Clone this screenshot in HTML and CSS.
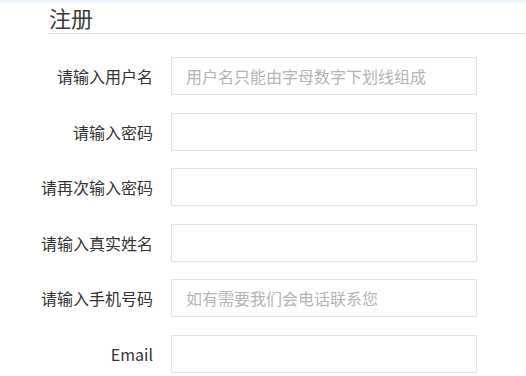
FILE: index.html
```html
<!DOCTYPE html>
<html lang="zh-CN">
<head>
    <meta charset="UTF-8">
    <meta name="viewport" content="width=device-width, initial-scale=1.0">
    <title>注册</title>
    <link rel="stylesheet" href="styles.css">
</head>
<body>
    <div class="page">
        <h2 class="title">注册</h2>

        <form class="reg-form">
            <label for="username">请输入用户名</label>
            <input type="text" id="username" placeholder="用户名只能由字母数字下划线组成">

            <label for="password">请输入密码</label>
            <input type="password" id="password">

            <label for="password2">请再次输入密码</label>
            <input type="password" id="password2">

            <label for="realname">请输入真实姓名</label>
            <input type="text" id="realname">

            <label for="phone">请输入手机号码</label>
            <input type="text" id="phone" placeholder="如有需要我们会电话联系您">

            <label for="email">Email</label>
            <input type="text" id="email">
        </form>
    </div>
</body>
</html>
```

FILE: styles.css
```css
body {
    font-family: "Noto Sans CJK SC", "Noto Sans", sans-serif;
    margin: 0;
    color: #333;
    background: linear-gradient(#e2f1fb, #ffffff 4px) no-repeat;
    background-color: #fff;
}
.page {
    padding-top: 6px;
}
.title {
    margin: 0 0 0 49px;
    padding-bottom: 5px;
    font-size: 22px;
    line-height: 22px;
    font-weight: normal;
    color: #3a3a3a;
    border-bottom: 1px solid #dedede;
}
.reg-form {
    display: grid;
    grid-template-columns: 153px 306px;
    column-gap: 18px;
    row-gap: 17.5px;
    margin-top: 23px;
}
.reg-form label {
    align-self: center;
    text-align: right;
    font-size: 16px;
    color: #333;
}
.reg-form input {
    height: 38px;
    box-sizing: border-box;
    padding: 0 14px;
    border: 1px solid #e3e3e3;
    border-radius: 0;
    font-family: inherit;
    font-size: 16px;
    color: #333;
    outline: none;
}
.reg-form input::placeholder {
    color: #b4b4b4;
}
```
